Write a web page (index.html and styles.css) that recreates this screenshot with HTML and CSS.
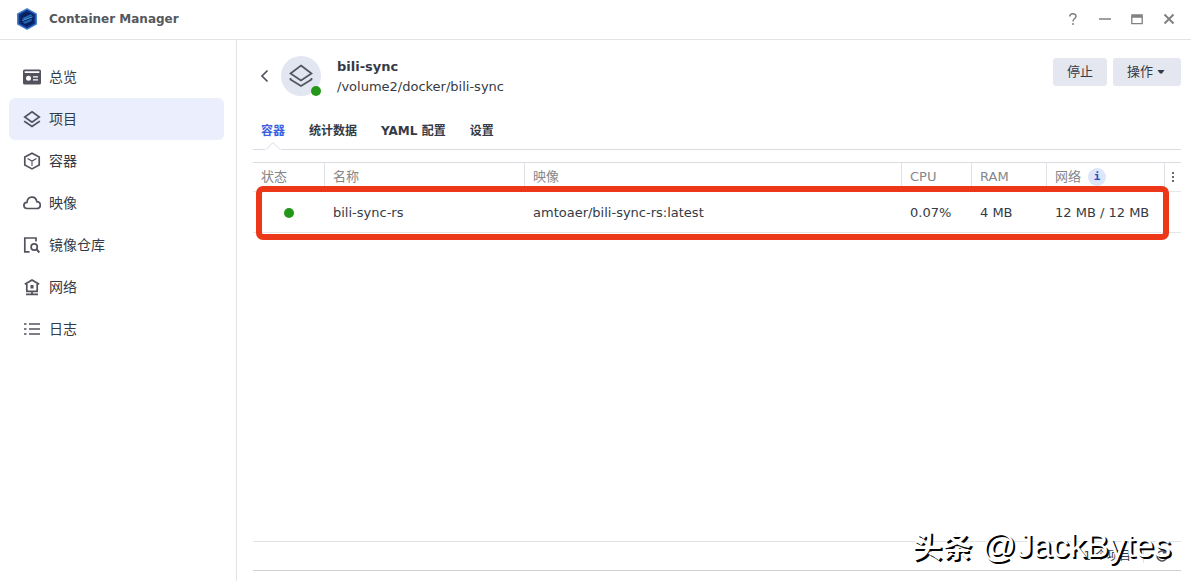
FILE: index.html
```html
<!DOCTYPE html>
<html lang="zh-CN">
<head>
<meta charset="utf-8">
<title>Container Manager</title>
<link rel="stylesheet" href="styles.css">
</head>
<body>
<div class="window">
  <header class="titlebar">
    <svg class="app-logo" viewBox="0 0 22 24" aria-hidden="true">
      <path d="M11 1 21 6.500V17.500L11 23 1 17.500V6.500Z" fill="#4a86c8"/>
      <path d="M11 2.500 19.500 7.200V16.800L11 21.500 2.500 16.800V7.200Z" fill="#0d3590"/>
      <path d="M11 4.500 17.500 8V16L11 19.500 4.500 16V8Z" fill="#08205c"/>
      <path d="M6 11.300 14.500 7.200 16.500 8.500 8.500 12.300Z" fill="#2368b4"/>
      <path d="M6.500 15 16 11.500 15.500 14 9 17Z" fill="#1f62b0"/>
      <path d="M6 13.500 16.500 9.800" stroke="#5aa9e2" stroke-width="1" fill="none"/>
    </svg>
    <h1 class="app-title">Container Manager</h1>
    <div class="window-controls">
      <button class="win-btn" aria-label="帮助"><svg viewBox="0 0 16 16"><path d="M4.800 5.500C4.800 1.800 11 1.800 11 5.300 11 7.500 8 7.600 8 10.500"/><path d="M8 12v2"/></svg></button>
      <button class="win-btn" aria-label="最小化"><svg viewBox="0 0 16 16"><path d="M2 8h12"/></svg></button>
      <button class="win-btn" aria-label="最大化"><svg viewBox="0 0 16 16"><path d="M2.800 5.500V12.700h10.400V5.500" stroke-width="1.300"/><path d="M2.200 5h11.600" stroke-width="3.500"/></svg></button>
      <button class="win-btn" aria-label="关闭"><svg viewBox="0 0 16 16"><path d="M3.500 3.500l9 9M12.500 3.500l-9 9" stroke-width="2"/></svg></button>
    </div>
  </header>
  <div class="body">
    <nav class="sidebar">
      <a class="nav-item" href="#overview"><svg class="icon" viewBox="0 0 18 18"><path fill="#52535e" stroke="none" fill-rule="evenodd" d="M1.500 1.500h15Q18 1.500 18 3v12Q18 16.500 16.500 16.500h-15Q0 16.500 0 15v-12Q0 1.500 1.500 1.500ZM1.700 3.300v1.700h14.600V3.300ZM5.500 7.700a2.500 2.500 0 1 0 0 5 2.500 2.500 0 0 0 0-5ZM10 8.200v1.300h5V8.200ZM10 11.200v1.300h5v-1.300Z"/></svg>总览</a>
      <a class="nav-item active" href="#project"><svg class="icon" viewBox="0 0 18 18"><path d="M9 1.700 16.300 7 9 12.300 1.700 7Z"/><path d="M1.700 10.700V11.500L9 16.500 16.300 11.500V10.700"/></svg>项目</a>
      <a class="nav-item" href="#container"><svg class="icon" viewBox="0 0 18 18"><path d="M9 1.200 16.200 5V13L9 16.900 1.800 13V5Z"/><path d="M4.500 6.500 9 9 13.500 6.500M9 9v5" stroke-width="1.100"/></svg>容器</a>
      <a class="nav-item" href="#image"><svg class="icon" viewBox="0 0 18 18"><path d="M4.500 14.500C-.2 14.500-.2 8.500 4 8.300 4.500 1.800 12.700 1.200 13.800 7.700 18.500 8 18.300 14.500 14 14.500Z"/></svg>映像</a>
      <a class="nav-item" href="#registry"><svg class="icon" viewBox="0 0 18 18"><path d="M6.500 15.800H1.800V2H13V5.500"/><circle cx="11.200" cy="11" r="3.100"/><path d="M13.600 13.400 16.300 16.500" stroke-width="2"/></svg>镜像仓库</a>
      <a class="nav-item" href="#network"><svg class="icon" viewBox="0 0 18 18"><path d="M1.800 6.300 9 2 16.200 6.300M3.800 6v7.300H14.200V6M9 13v3M3 16.300H15"/><rect x="7.500" y="7" width="3" height="3.500" fill="#52535e" stroke="none"/></svg>网络</a>
      <a class="nav-item" href="#log"><svg class="icon" viewBox="0 0 18 18"><path d="M1 4h2.500M6 4h11M1 9h2.500M6 9h11M1 14h2.500M6 14h11"/></svg>日志</a>
    </nav>
    <main class="main">
      <section class="project">
        <button class="back" aria-label="返回"><svg viewBox="0 0 12 16"><path d="M8.500 2.500 3 8 8.500 13.500"/></svg></button>
        <div class="avatar">
          <svg viewBox="0 0 24 24"><path d="M12 1.500 22.500 9.500 12 16.500 1.500 9.500Z"/><path d="M1.500 14V15.500L12 22 22.500 15.500V14"/></svg>
          <span class="dot avatar-dot"></span>
        </div>
        <div class="project-info">
          <h2 class="project-name">bili-sync</h2>
          <p class="project-path">/volume2/docker/bili-sync</p>
        </div>
        <div class="actions">
          <button class="btn">停止</button>
          <button class="btn menu-btn">操作<svg class="caret" viewBox="0 0 8 4"><path d="M.5 0h7L5 3.500H3Z"/></svg></button>
        </div>
      </section>
      <div class="tabs" role="tablist">
        <button class="tab selected" role="tab" aria-selected="true">容器<svg class="notch" viewBox="0 0 16 9"><path d="M1 8.500 8 1.500 15 8.500"/></svg></button>
        <button class="tab" role="tab">统计数据</button>
        <button class="tab" role="tab">YAML 配置</button>
        <button class="tab" role="tab">设置</button>
      </div>
      <div class="grid">
        <table class="table">
          <colgroup><col class="c-state"><col class="c-name"><col><col class="c-cpu"><col class="c-ram"><col class="c-net"><col class="c-more"></colgroup>
          <thead>
            <tr><th>状态</th><th>名称</th><th>映像</th><th>CPU</th><th>RAM</th><th><span class="net-head">网络<span class="info">i</span></span></th><th class="more"><button class="more-btn" aria-label="更多"><svg viewBox="0 0 4 12"><path d="M1 1h2v2H1ZM1 5h2v2H1ZM1 9h2v2H1Z"/></svg></button></th></tr>
          </thead>
          <tbody>
            <tr><td class="state"><span class="dot"></span></td><td>bili-sync-rs</td><td>amtoaer/bili-sync-rs:latest</td><td>0.07%</td><td>4 MB</td><td>12 MB / 12 MB</td><td></td></tr>
          </tbody>
        </table>
        <div class="highlight"></div>
      </div>
      <footer class="status">
        <span class="count">1 个项目</span>
        <button class="refresh" aria-label="刷新"><svg viewBox="0 0 14 14"><path d="M12 7A5 5 0 1 1 10.500 3.400M10.800.8v3H7.800"/></svg></button>
      </footer>
    </main>
  </div>
  <div class="watermark"><span class="watermark-site">头条</span> @JackBytes</div>
</div>
</body>
</html>
```
FILE: styles.css
```css
* { box-sizing: border-box; }
body {
  margin: 0;
  background: #fff;
  color: #343a46;
  font: 13px/20px "DejaVu Sans", "Noto Sans CJK SC", sans-serif;
}
button { margin: 0; padding: 0; border: 0; background: none; color: inherit; font: inherit; }
svg { display: block; fill: none; stroke: #52535e; stroke-width: 1.7; }
h1, h2, p { margin: 0; }

.window { position: relative; display: flex; flex-direction: column; min-height: 100vh; }
.titlebar {
  display: flex;
  align-items: center;
  height: 40px;
  padding: 0 14px 2px 16px;
  border-bottom: 1px solid #e1e3e6;
}
.app-logo { width: 22px; height: 24px; margin-right: 11px; stroke: none; }
.app-title { color: #55585d; font-size: 12px; font-weight: bold; }
.window-controls { display: flex; gap: 16px; margin-left: auto; }
.win-btn { width: 16px; height: 16px; }
.win-btn svg { width: 16px; height: 16px; stroke: #808184; stroke-width: 1.5; }

.body { display: flex; flex: 1; }
.sidebar {
  flex: 0 0 237px;
  padding: 16px 12px 0 9px;
  border-right: 1px solid #e1e3e6;
}
.nav-item {
  display: flex;
  align-items: center;
  gap: 8px;
  height: 42px;
  padding-left: 14px;
  border-radius: 6px;
  color: #343a46;
  font-size: 14px;
  text-decoration: none;
}
.nav-item.active { background: #ebeffd; }
.icon { width: 18px; height: 18px; }

.main { display: flex; flex: 1; flex-direction: column; min-width: 0; padding: 16px 10px 10px 16px; }
.project { display: flex; align-items: center; height: 40px; }
.back { width: 12px; height: 16px; margin: 0 10px 0 6px; }
.back svg { width: 12px; height: 16px; }
.avatar {
  position: relative;
  display: grid;
  place-items: center;
  width: 40px;
  height: 40px;
  border-radius: 50%;
  background: #e2e6f0;
}
.avatar svg { width: 24px; height: 24px; }
.dot { display: inline-block; width: 10px; height: 10px; border-radius: 50%; background: #249619; vertical-align: middle; }
.avatar-dot { position: absolute; right: 0; bottom: 0; }
.project-info { margin-left: 16px; padding-top: 2px; }
.project-name { font-size: 13px; }
.actions { display: flex; gap: 6px; align-self: flex-start; margin: 2px 0 0 auto; }
.btn { height: 28px; padding: 0 14px; border-radius: 3px; background: #e4e7ef; }
.menu-btn { display: flex; align-items: center; gap: 4px; padding-right: 16px; }
.caret { width: 8px; height: 4px; fill: #343a46; stroke: none; }

.tabs { display: flex; gap: 24px; height: 54px; padding: 17px 8px 0; border-bottom: 1px solid #d9dce1; }
.tab { position: relative; font-size: 12px; font-weight: bold; }
.tab.selected { color: #3b5fe0; }
.notch { position: absolute; left: 4px; bottom: -1px; width: 16px; height: 9px; background: linear-gradient(#fff, #fff); stroke: #d4d9ee; stroke-width: 1; }

.grid { position: relative; flex: 1; margin-top: 12px; }
.table { width: 100%; border-collapse: separate; border-spacing: 0; table-layout: fixed; }
.c-state { width: 72px; }
.c-name { width: 200px; }
.c-cpu { width: 70px; }
.c-ram { width: 75px; }
.c-net { width: 118px; }
.c-more { width: 16px; }
.table th, .table td { padding: 0 8px; text-align: left; white-space: nowrap; }
.table th {
  height: 30px;
  border-top: 1px solid #d9dce1;
  border-right: 1px solid #dfe2e6;
  border-bottom: 1px solid #e4e7ea;
  color: #85878b;
  font-weight: normal;
}
.table th:last-child { border-right: 0; }
.table td { height: 41px; padding-top: 2px; border-bottom: 1px solid #e4e7ea; }
.table .state { padding-top: 0; text-align: center; }
.net-head { display: flex; align-items: center; gap: 7px; }
.info {
  width: 18px;
  height: 18px;
  border-radius: 50%;
  background: #dde5fb;
  color: #2850bd;
  font: bold 11px/18px "DejaVu Sans Mono", monospace;
  text-align: center;
}
.table .more { padding: 0 6px; }
.more-btn { display: block; }
.more-btn svg { width: 4px; height: 12px; fill: #66696e; stroke: none; }
.highlight { position: absolute; top: 24px; right: 12px; left: 3px; height: 54px; border: 6px solid #ec3818; border-radius: 7px; }

.status {
  display: flex;
  align-items: center;
  justify-content: flex-end;
  gap: 12px;
  height: 30px;
  padding-right: 12px;
  border-top: 1px solid #dfe2e6;
  border-bottom: 1px solid #cfd1d4;
  font-size: 12px;
}
.refresh { padding-left: 11px; border-left: 1px solid #dfe2e6; }
.refresh svg { width: 14px; height: 14px; stroke-width: 1.5; }
.watermark {
  position: absolute;
  right: 20px;
  bottom: 14px;
  color: #fff;
  font: 34px/40px "Liberation Sans", "Noto Sans CJK SC", sans-serif;
  text-shadow: 2px 2px 0 #000;
  pointer-events: none;
}
.watermark-site { font-size: 30px; font-weight: bold; }
```
